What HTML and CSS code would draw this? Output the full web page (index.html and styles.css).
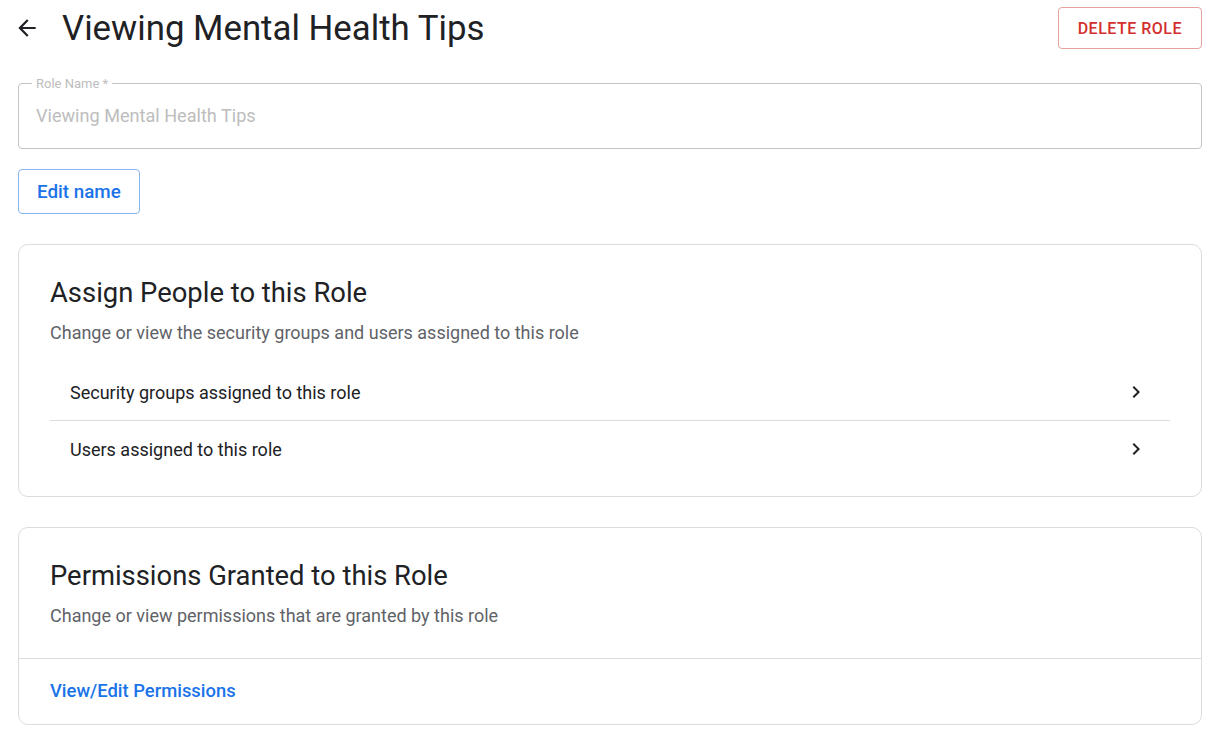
FILE: index.html
```html
<!DOCTYPE html>
<html>
<head>
	<title>Viewing Mental Health Tips</title>
	<meta charset="utf-8">
	<meta name="viewport" content="width=device-width, initial-scale=1">
	<link rel="stylesheet" href="styles.css">
</head>
<body>
	<header class="top">
		<div class="title-wrap">
			<button class="back" type="button" aria-label="Back">
				<svg width="26" height="26" viewBox="0 0 24 24"><path d="M20 11H7.83l5.59-5.59L12 4l-8 8 8 8 1.41-1.41L7.83 13H20v-2z" fill="#202124"/></svg>
			</button>
			<h1>Viewing Mental Health Tips</h1>
		</div>
		<button class="btn-delete" type="button">Delete Role</button>
	</header>

	<fieldset class="field">
		<legend>Role Name *</legend>
		<input type="text" value="Viewing Mental Health Tips" disabled>
	</fieldset>

	<button class="btn-edit" type="button">Edit name</button>

	<section class="card">
		<div class="card-body">
			<h2>Assign People to this Role</h2>
			<p class="sub">Change or view the security groups and users assigned to this role</p>
			<ul class="list">
				<li>
					<span>Security groups assigned to this role</span>
					<svg width="24" height="24" viewBox="0 0 24 24"><path d="M10 6 8.59 7.41 13.17 12l-4.58 4.59L10 18l6-6z" fill="#202124"/></svg>
				</li>
				<li>
					<span>Users assigned to this role</span>
					<svg width="24" height="24" viewBox="0 0 24 24"><path d="M10 6 8.59 7.41 13.17 12l-4.58 4.59L10 18l6-6z" fill="#202124"/></svg>
				</li>
			</ul>
		</div>
	</section>

	<section class="card">
		<div class="card-body">
			<h2>Permissions Granted to this Role</h2>
			<p class="sub">Change or view permissions that are granted by this role</p>
		</div>
		<div class="card-foot">
			<a href="#">View/Edit Permissions</a>
		</div>
	</section>
</body>
</html>
```

FILE: styles.css
```css
body {
	margin: 0;
	padding: 0 6px 0 18px;
	font-family: Roboto, "Liberation Sans", sans-serif;
	color: #202124;
	background: #fff;
}

.top {
	display: flex;
	align-items: center;
	justify-content: space-between;
	height: 56px;
}

.title-wrap {
	display: flex;
	align-items: center;
	gap: 22px;
}

.back {
	display: flex;
	margin-left: -4px;
	padding: 0;
	border: none;
	background: none;
	cursor: pointer;
}

h1 {
	margin: 0;
	font-size: 34.8px;
	font-weight: 400;
}

.btn-delete {
	height: 42px;
	padding: 0 19px;
	background: #fff;
	border: 1px solid #e6a1a1;
	border-radius: 4px;
	color: #d32f2f;
	font-family: inherit;
	font-size: 16px;
	font-weight: 500;
	text-transform: uppercase;
	letter-spacing: 0.5px;
	cursor: pointer;
}

.field {
	margin: 21px 0 0;
	padding: 0 17px;
	height: 72px;
	box-sizing: border-box;
	border: 1px solid #c4c4c4;
	border-radius: 4px;
}

.field legend {
	padding: 0 4px;
	margin-left: -4px;
	font-size: 13px;
	color: #bdbdbd;
	line-height: 13px;
}

.field input {
	width: 100%;
	margin-top: 15px;
	padding: 0;
	border: none;
	background: none;
	font-family: inherit;
	font-size: 18.1px;
	color: #bdbdbd;
}

.btn-edit {
	margin-top: 20px;
	height: 45px;
	padding: 0 18px;
	background: #fff;
	border: 1px solid #8ab4f0;
	border-radius: 4px;
	color: #1a73e8;
	font-family: inherit;
	font-size: 18.8px;
	font-weight: 500;
	cursor: pointer;
}

.card {
	margin-top: 30px;
	border: 1px solid #dadce0;
	border-radius: 10px;
}

.card-body {
	padding: 32px 31px 0;
}

h2 {
	margin: 0;
	font-size: 27.4px;
	font-weight: 400;
	line-height: 32px;
}

.sub {
	margin: 12px 0 0;
	font-size: 18px;
	color: #5f6368;
	line-height: 24px;
}

.list {
	list-style: none;
	margin: 19px 0 0;
	padding: 0 0 19px;
}

.list li {
	display: flex;
	align-items: center;
	justify-content: space-between;
	height: 56px;
	padding: 0 22px 0 20px;
	font-size: 18px;
}

.list li + li {
	border-top: 1px solid #dadce0;
}

.card-foot {
	margin-top: 30px;
	border-top: 1px solid #dadce0;
	padding: 21px 31px 23px;
}

.card-foot a {
	color: #1a73e8;
	font-size: 18.4px;
	font-weight: 500;
	text-decoration: none;
}
```
